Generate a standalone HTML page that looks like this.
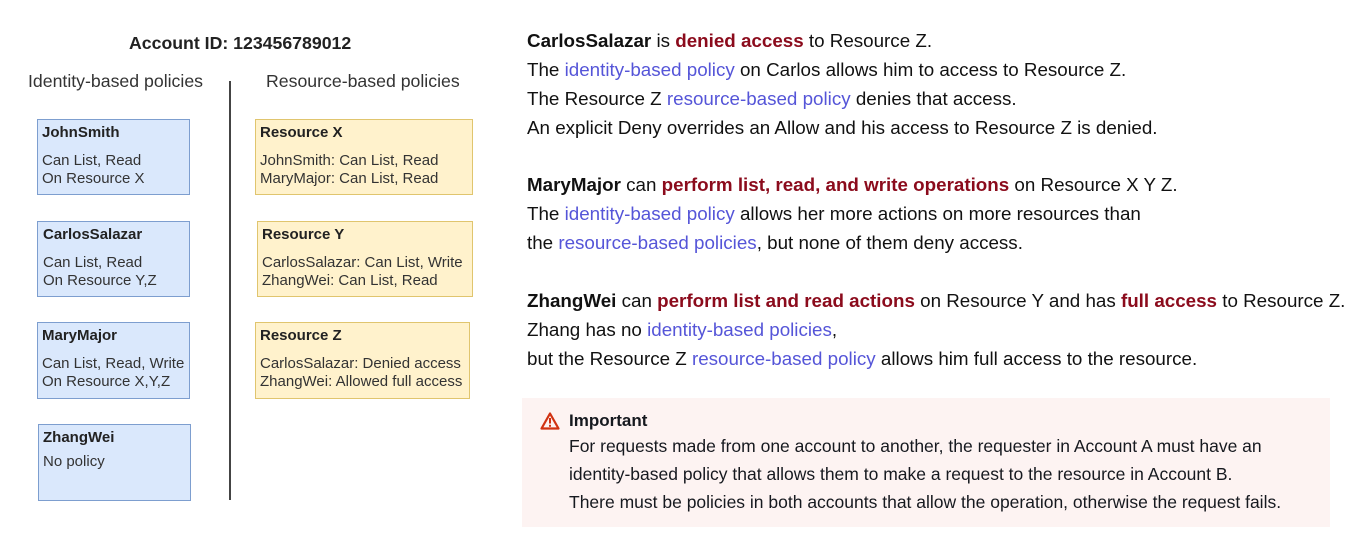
<!DOCTYPE html>
<html><head><meta charset="utf-8"><style>
body{margin:0;width:1364px;height:551px;background:#fff;position:relative;overflow:hidden;font-family:"Liberation Sans",Arial,sans-serif;}
.a{position:absolute;white-space:nowrap;}
.box{position:absolute;box-sizing:border-box;border:1.5px solid #7d9ecf;background:#dae8fc;font-size:15px;color:#333;padding:4px 0 0 4px;line-height:18px;}
.y{border-color:#e0c56e;background:#fff2cc;}
.box b{display:block;margin-bottom:10px;color:#222;}
.t{font-size:18.8px;color:#111;line-height:29px;}
.r{color:#8b0b1c;font-weight:bold;}
.bl{color:#5555d8;}
.imp{position:absolute;left:522px;top:398px;width:808px;height:129px;background:#fdf3f2;}
</style></head><body>
<div class="a" style="left:129px;top:33px;font-size:17.7px;font-weight:bold;color:#222;">Account ID: 123456789012</div>
<div class="a" style="left:28px;top:71px;font-size:17.7px;color:#333;">Identity-based policies</div>
<div class="a" style="left:266px;top:71px;font-size:17.7px;color:#333;">Resource-based policies</div>
<div class="a" style="left:229px;top:81px;width:2px;height:419px;background:#444;"></div>

<div class="box" style="left:37px;top:119px;width:153px;height:76px;"><b>JohnSmith</b>Can List, Read<br>On Resource X</div>
<div class="box" style="left:37px;top:221px;width:153px;height:76px;padding-left:5px"><b>CarlosSalazar</b>Can List, Read<br>On Resource Y,Z</div>
<div class="box" style="left:37px;top:322px;width:153px;height:77px;"><b>MaryMajor</b>Can List, Read, Write<br>On Resource X,Y,Z</div>
<div class="box" style="left:38px;top:424px;width:153px;height:77px;"><b style="margin-bottom:6px">ZhangWei</b>No policy</div>

<div class="box y" style="left:255px;top:119px;width:218px;height:76px;"><b>Resource X</b>JohnSmith: Can List, Read<br>MaryMajor: Can List, Read</div>
<div class="box y" style="left:257px;top:221px;width:216px;height:76px;"><b>Resource Y</b>CarlosSalazar: Can List, Write<br>ZhangWei: Can List, Read</div>
<div class="box y" style="left:255px;top:322px;width:215px;height:77px;"><b>Resource Z</b>CarlosSalazar: Denied access<br>ZhangWei: Allowed full access</div>

<div class="a t" style="left:527px;top:26px;">
<b>CarlosSalazar</b> is <span class="r">denied access</span> to Resource Z.<br>
The <span class="bl">identity-based policy</span> on Carlos allows him to access to Resource Z.<br>
The Resource Z <span class="bl">resource-based policy</span> denies that access.<br>
An explicit Deny overrides an Allow and his access to Resource Z is denied.</div>
<div class="a t" style="left:527px;top:170px;">
<b>MaryMajor</b> can <span class="r">perform list, read, and write operations</span> on Resource X Y Z.<br>
The <span class="bl">identity-based policy</span> allows her more actions on more resources than<br>
the <span class="bl">resource-based policies</span>, but none of them deny access.</div>
<div class="a t" style="left:527px;top:286px;">
<b>ZhangWei</b> can <span class="r">perform list and read actions</span> on Resource Y and has <span class="r">full access</span> to Resource Z.<br>
Zhang has no <span class="bl">identity-based policies</span>,<br>
but the Resource Z <span class="bl">resource-based policy</span> allows him full access to the resource.</div>

<div class="imp">
<svg style="position:absolute;left:18px;top:14px" width="20" height="18" viewBox="0 0 20 18"><path d="M10 1.5 L18.5 16.5 H1.5 Z" fill="none" stroke="#d13212" stroke-width="2.2" stroke-linejoin="round"/><rect x="9" y="6" width="2" height="5.5" fill="#d13212"/><rect x="9" y="12.8" width="2" height="2" fill="#d13212"/></svg>
<div class="a" style="left:47px;top:13px;font-size:17px;font-weight:bold;color:#16191f;">Important</div>
<div class="a" style="left:47px;top:34px;font-size:17.5px;line-height:28px;color:#16191f;">For requests made from one account to another, the requester in Account A must have an<br>identity-based policy that allows them to make a request to the resource in Account B.<br>There must be policies in both accounts that allow the operation, otherwise the request fails.</div>
</div>
</body></html>
